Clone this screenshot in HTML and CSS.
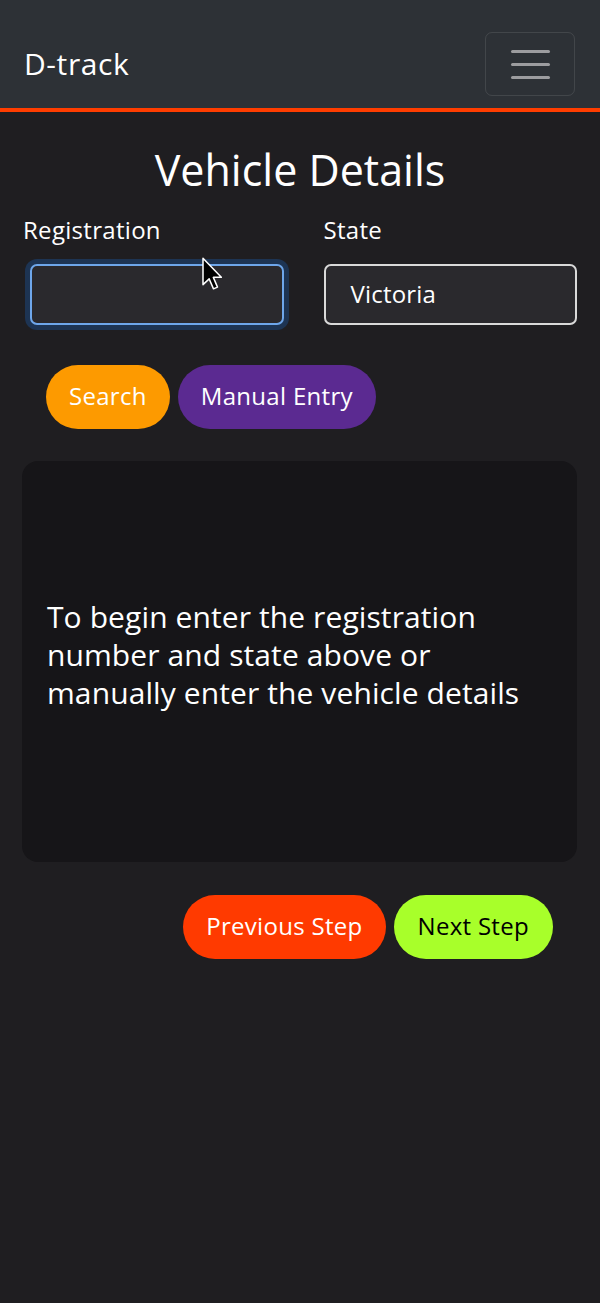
FILE: index.html
```html
<!DOCTYPE html>
<html lang="en">
<head>
<meta charset="utf-8">
<title>D-track</title>
<link rel="stylesheet" href="styles.css">
</head>
<body>
<nav class="navbar">
  <span class="brand">D-track</span>
  <button class="toggler" aria-label="Toggle navigation">
    <span class="bar"></span><span class="bar"></span><span class="bar"></span>
  </button>
</nav>
<main class="container">
  <h1 class="title">Vehicle Details</h1>
  <div class="form-row">
    <div class="field">
      <label class="label">Registration</label>
      <div class="input input-focus"></div>
    </div>
    <div class="field">
      <label class="label">State</label>
      <div class="input">Victoria</div>
    </div>
  </div>
  <div class="actions">
    <button class="pill pill-search">Search</button>
    <button class="pill pill-manual">Manual Entry</button>
  </div>
  <section class="card">
    <p class="card-text">To begin enter the registration number and state above or manually enter the vehicle details</p>
  </section>
  <div class="steps">
    <button class="pill pill-prev">Previous Step</button>
    <button class="pill pill-next">Next Step</button>
  </div>
</main>
<svg class="cursor" width="20" height="34" viewBox="0 0 12 20" aria-hidden="true">
  <path d="M0.6 0.6 L0.6 16.4 L4.3 12.9 L6.9 18.9 L9.3 17.9 L6.8 12 L11.6 12 Z" fill="#000" stroke="#fff" stroke-width="0.9" stroke-linejoin="round"/>
</svg>
</body>
</html>
```
FILE: styles.css
```css
* { box-sizing: border-box; }
html, body { margin: 0; padding: 0; }
body {
  background: #1f1e21;
  color: #ffffff;
  font-family: "Open Sans", "Noto Sans", sans-serif;
  min-height: 1303px;
  position: relative;
}
.navbar {
  box-sizing: content-box;
  height: 96px;
  padding: 0 25px 12px 24px;
  background: #2d3136;
  border-bottom: 4px solid #ff3d00;
  display: flex;
  align-items: flex-end;
  justify-content: space-between;
}
.brand {
  font-size: 30px;
  font-weight: 400;
  letter-spacing: 0.6px;
  line-height: 64px;
}
.toggler {
  width: 90px;
  height: 64px;
  background: transparent;
  border: 1px solid rgba(255, 255, 255, 0.1);
  border-radius: 7px;
  display: flex;
  flex-direction: column;
  align-items: center;
  justify-content: center;
  gap: 10px;
  padding: 0;
}
.toggler .bar {
  display: block;
  width: 39px;
  height: 3px;
  border-radius: 2px;
  background: #9c9c9f;
}
.container {
  padding: 0 23px;
}
.title {
  margin: 0;
  padding-top: 31px;
  font-size: 43px;
  font-weight: 400;
  line-height: 54px;
  text-align: center;
}
.form-row {
  display: grid;
  grid-template-columns: 1fr 1fr;
  column-gap: 47px;
  margin-top: 17px;
}
.label {
  display: block;
  font-size: 24px;
  letter-spacing: 0.3px;
  line-height: 32px;
  height: 50px;
}
.input {
  height: 61px;
  border: 2px solid #d9d9d9;
  border-radius: 7px;
  background: #2a292d;
  font-size: 24px;
  letter-spacing: 0.2px;
  line-height: 55px;
  padding-left: 25px;
}
.input-focus {
  margin-left: 7px;
  margin-right: -7px;
  border-color: #6ea6ea;
  box-shadow: 0 0 0 5px #1d3453;
}
.actions {
  display: flex;
  gap: 8px;
  margin-top: 40px;
  padding-left: 23px;
}
.pill {
  height: 64px;
  border: none;
  border-radius: 32px;
  font-family: inherit;
  font-size: 24px;
  letter-spacing: 0.3px;
  padding: 0 23px 3px;
  color: #ffffff;
}
.pill-search { background: #fd9a00; }
.pill-manual { background: #5b2a91; }
.card {
  margin-top: 32px;
  margin-left: -1px;
  height: 401px;
  background: #161518;
  border-radius: 16px;
  display: flex;
  align-items: center;
  padding: 0 25px 14px;
}
.card-text {
  margin: 0;
  font-size: 30px;
  letter-spacing: 0.1px;
  line-height: 38px;
}
.steps {
  display: flex;
  justify-content: flex-end;
  gap: 8px;
  margin-top: 33px;
  padding-right: 24px;
}
.pill-prev { background: #ff3a00; padding-left: 23px; padding-right: 23px; }
.pill-next { background: #a8ff2a; color: #000000; padding-left: 24px; padding-right: 24px; }
.cursor {
  position: absolute;
  left: 202px;
  top: 257px;
}
```
